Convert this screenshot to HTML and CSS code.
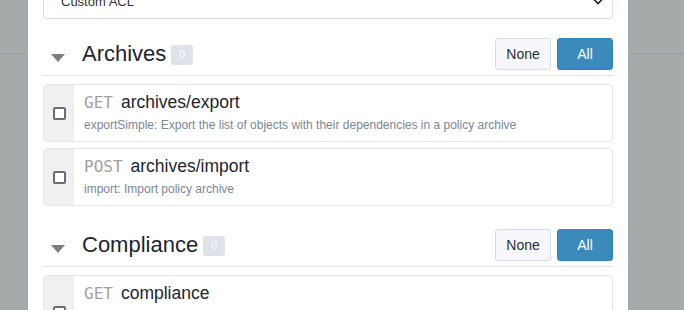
FILE: index.html
```html
<!DOCTYPE html>
<html>
<head>
    <meta name="viewport" content="width=device-width, initial-scale=1.0">
    <link rel="stylesheet" href="styles.css">
</head>
<body>

<div class="modal">
    <div class="select">
        <span>Custom ACL</span>
        <svg class="chevron" width="10" height="7" viewBox="0 0 10 7"><path d="M1 1.5 L5 5.5 L9 1.5" fill="none" stroke="#222" stroke-width="1.6"/></svg>
    </div>

    <div class="section">
        <div class="section-head">
            <span class="caret"></span>
            <span class="title">Archives</span>
            <span class="badge">0</span>
            <div class="actions">
                <button type="button" class="btn btn-none">None</button>
                <button type="button" class="btn btn-all">All</button>
            </div>
        </div>
        <div class="route">
            <div class="route-check"><span class="checkbox"></span></div>
            <div class="route-body">
                <div class="route-line"><span class="verb">GET</span><span class="path">archives/export</span></div>
                <div class="route-desc">exportSimple: Export the list of objects with their dependencies in a policy archive</div>
            </div>
        </div>
        <div class="route">
            <div class="route-check"><span class="checkbox"></span></div>
            <div class="route-body">
                <div class="route-line"><span class="verb">POST</span><span class="path">archives/import</span></div>
                <div class="route-desc">import: Import policy archive</div>
            </div>
        </div>
    </div>

    <div class="section">
        <div class="section-head">
            <span class="caret"></span>
            <span class="title">Compliance</span>
            <span class="badge">0</span>
            <div class="actions">
                <button type="button" class="btn btn-none">None</button>
                <button type="button" class="btn btn-all">All</button>
            </div>
        </div>
        <div class="route">
            <div class="route-check"><span class="checkbox"></span></div>
            <div class="route-body">
                <div class="route-line"><span class="verb">GET</span><span class="path">compliance</span></div>
                <div class="route-desc">getGlobalCompliance: Get the global compliance of the whole infrastructure, with the compliance of every rule and directive for all nodes</div>
            </div>
        </div>
    </div>
</div>

</body>
</html>
```

FILE: styles.css
```css
* {
    box-sizing: border-box;
}

html, body {
    height: 100%;
}

body {
    margin: 0;
    overflow: hidden;
    font-family: "Liberation Sans", Arial, sans-serif;
    background: linear-gradient(to bottom, #a6aaab 0, #a6aaab 53px, #989da1 53px, #989da1 54px, #a6aaab 54px);
}

.modal {
    width: 600px;
    height: 100%;
    margin-left: 28px;
    padding: 0 15px;
    background-color: #ffffff;
    overflow: hidden;
}

.select {
    display: flex;
    align-items: center;
    justify-content: space-between;
    height: 35px;
    margin-top: -16px;
    padding: 0 9px 0 17px;
    border: 1px solid #d3d8ea;
    border-radius: 4px;
    font-size: 13px;
    color: #333;
}

.chevron {
    margin-top: -1px;
}

.section {
    margin-top: 19px;
}

.section + .section {
    margin-top: 23px;
}

.section-head {
    display: flex;
    align-items: center;
    padding-bottom: 5px;
    border-bottom: 1px solid #e3e3e3;
    margin-bottom: 8px;
}

.caret {
    width: 0;
    height: 0;
    margin: 8px 17px 0 8px;
    border-left: 7.5px solid transparent;
    border-right: 7.5px solid transparent;
    border-top: 8px solid #7b7e83;
}

.title {
    font-size: 22px;
    color: #1d2530;
    line-height: 32px;
}

.badge {
    display: inline-block;
    width: 22px;
    height: 20px;
    margin-left: 5px;
    margin-top: 2px;
    border-radius: 3px;
    background-color: #dfe2e9;
    color: #ffffff;
    font-size: 10px;
    line-height: 20px;
    text-align: center;
}

.actions {
    display: flex;
    gap: 6px;
    margin-left: auto;
}

.btn {
    width: 56px;
    height: 32px;
    border-radius: 3px;
    font-family: "Liberation Sans", Arial, sans-serif;
    font-size: 14px;
    cursor: pointer;
}

.btn-none {
    background-color: #f6f7fb;
    border: 1px solid #d6dbe8;
    color: #26303a;
}

.btn-all {
    background-color: #3a8bbb;
    border: 1px solid #3783b1;
    color: #ffffff;
}

.route {
    display: flex;
    min-height: 58px;
    margin-bottom: 6px;
    border: 1px solid #e6e6e6;
    border-radius: 4px;
    overflow: hidden;
}

.route-check {
    display: flex;
    flex-shrink: 0;
    align-items: center;
    justify-content: center;
    width: 30px;
    background-color: #f0f0f0;
}

.checkbox {
    width: 13px;
    height: 13px;
    margin-left: 1px;
    border: 2px solid #6d6b7a;
    border-radius: 2px;
    background-color: #ffffff;
}

.route-body {
    padding: 5px 10px 8px;
}

.route-line {
    display: flex;
    align-items: baseline;
    line-height: 24px;
}

.verb {
    font-family: "DejaVu Sans Mono", monospace;
    font-size: 16px;
    color: #a0a0a0;
    margin-right: 8px;
}

.path {
    font-size: 17.5px;
    color: #1d2530;
}

.route-desc {
    margin-top: 2px;
    font-size: 12px;
    line-height: 16px;
    color: #7b8697;
}
```
